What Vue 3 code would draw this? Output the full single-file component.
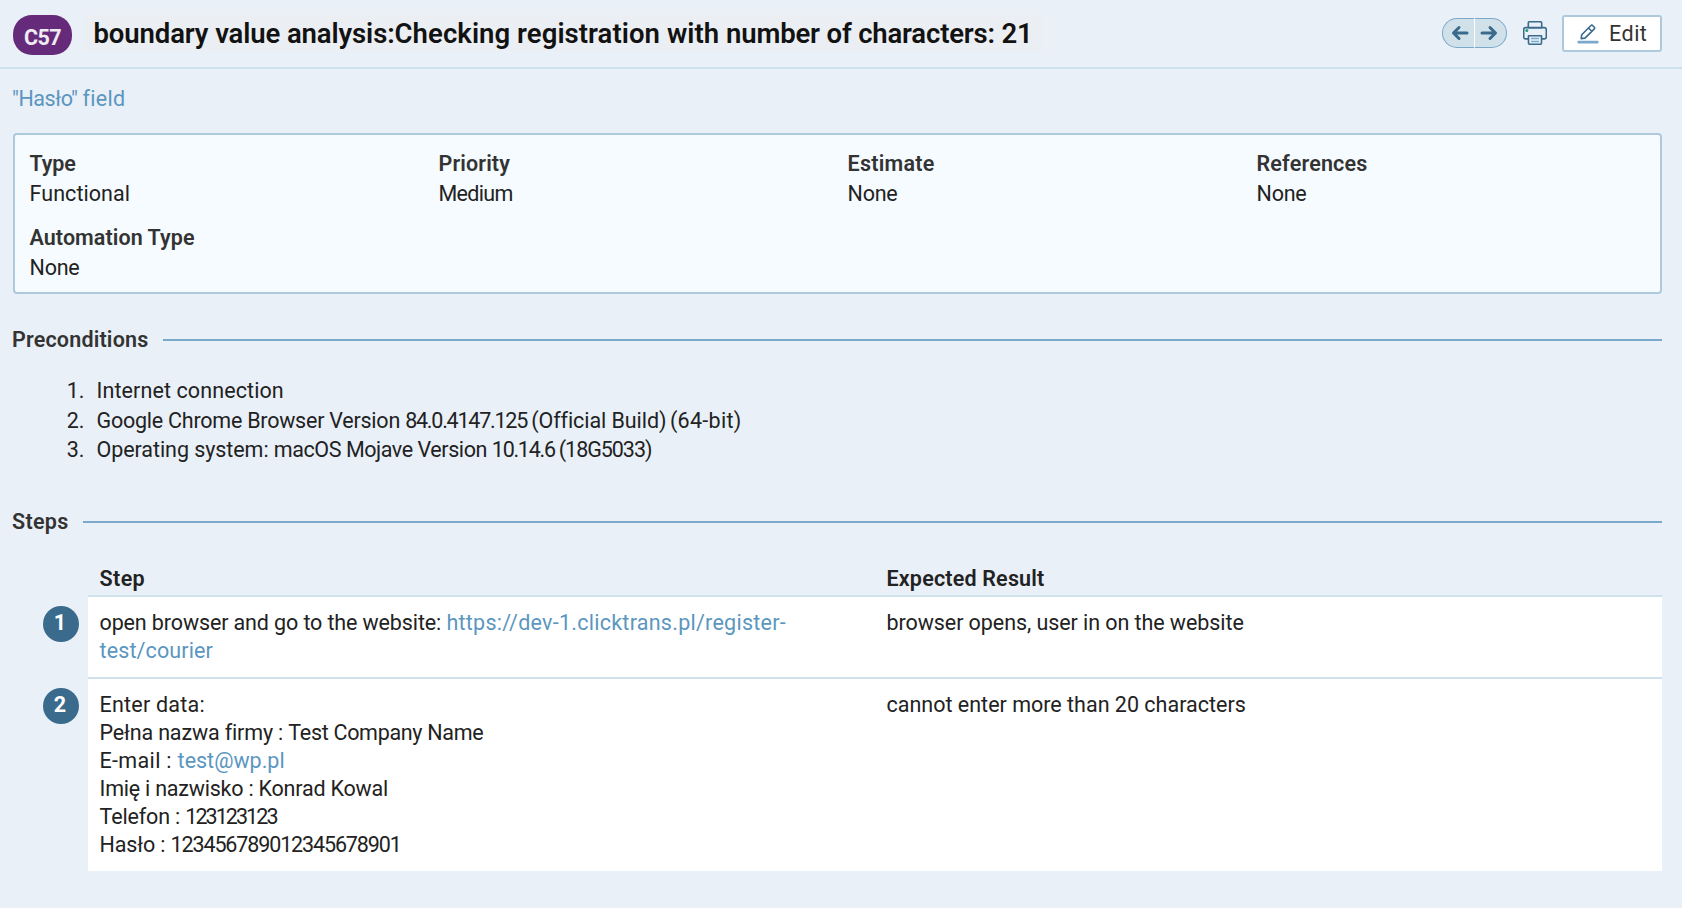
<script setup>
const details = [
  { label: 'Type', value: 'Functional', lt: 'n15', vt: 't6' },
  { label: 'Priority', value: 'Medium', lt: 't12', vt: 'n68' },
  { label: 'Estimate', value: 'None', lt: 't25', vt: 'n20' },
  { label: 'References', value: 'None', lt: 't19', vt: 'n20' },
  { label: 'Automation Type', value: 'None', lt: 't6', vt: 'n20' },
]

// Every line is a list of runs; `t` names the tracking class of the run.
const preconditions = [
  [{ s: 'Internet connection', t: 't10' }],
  [
    { s: 'Google Chrome Browser Version ', t: 'n25' },
    { s: '84.0.4147.125 ', t: 'n123' },
    { s: '(Official Build)', t: 'n7' },
    { s: ' ', t: 'n180' },
    { s: '(64-bit)', t: 't28' },
  ],
  [
    { s: 'Operating system: ', t: 'n7' },
    { s: 'macOS Mojave Version ', t: 'n43' },
    { s: '10.14.6 ', t: 'n126' },
    { s: '(18G5033)', t: 'n100' },
  ],
]

const steps = [
  {
    lines: [
      [
        { s: 'open browser and go to the website: ', t: 'n12' },
        { s: 'https://dev-1.clicktrans.pl/register-', t: 't25', link: true },
      ],
      [{ s: 'test/courier', t: 't12', link: true }],
    ],
    expected: { s: 'browser opens, user in on the website', t: 'n7' },
  },
  {
    lines: [
      [{ s: 'Enter data:', t: 't22' }],
      [{ s: 'Pełna nazwa firmy : ', t: 'n15' }, { s: 'Test Company Name', t: 'n30' }],
      [{ s: 'E-mail : ', t: 't34' }, { s: 'test@wp.pl', t: 't0' }],
      [{ s: 'Imię i nazwisko : ', t: 'n22' }, { s: 'Konrad Kowal', t: 'n20' }],
      [{ s: 'Telefon : ', t: 'n15' }, { s: '123123123', t: 'n195' }],
      [{ s: 'Hasło : ', t: 'n12' }, { s: '123456789012345678901', t: 'n113' }],
    ],
    expected: { s: 'cannot enter more than 20 characters', t: 't0' },
  },
]
steps[1].lines[2][1].link = true
</script>

<template>
  <div class="page">
    <header class="header">
      <span class="badge n58">C57</span>
      <h1 class="title"><span class="n10">boundary value analysis:</span><span class="t6">Checking registration with </span><span class="n17">number of characters: 21</span></h1>
      <div class="pager">
        <button class="page-btn prev" aria-label="Previous">
          <svg width="18" height="16" viewBox="0 0 18 16"><path d="M16 8H3M8 2.5 2.5 8 8 13.5" /></svg>
        </button>
        <button class="page-btn next" aria-label="Next">
          <svg width="18" height="16" viewBox="0 0 18 16"><path d="M2 8h13M10 2.5 15.5 8 10 13.5" /></svg>
        </button>
      </div>
      <svg class="printer" width="24" height="24" viewBox="0 0 24 24">
        <path class="edge" d="M5.3 17.9H2.7a2 2 0 0 1-2-2V8.6a2 2 0 0 1 2-2h18.6a2 2 0 0 1 2 2v7.3a2 2 0 0 1-2 2h-2.6" />
        <path class="edge sheet" d="M5.3 6.6V2a1.3 1.3 0 0 1 1.3-1.3h10.8A1.3 1.3 0 0 1 18.7 2v4.6z" />
        <path class="edge sheet" d="M5.5 14.7h13v7.3a1.3 1.3 0 0 1-1.3 1.3H6.8A1.3 1.3 0 0 1 5.5 22z" />
        <path class="rule" d="M8 17.5h8M8 20.5h8" />
        <circle cx="3.8" cy="9.6" r="1.5" fill="#1f9d7c" />
      </svg>
      <button class="edit">
        <svg width="22" height="20" viewBox="0 0 22 20">
          <rect x="0.5" y="16.7" width="21" height="2.8" rx="1" fill="#7ba9cb" />
          <path class="pen" d="M4.2 14.6 4.7 10.800 13.7 1.7a1.500 1.500 0 0 1 2.1 0l1.300 1.300a1.500 1.500 0 0 1 0 2.1L8 14.1z M11.500 4l3.300 3.300" />
        </svg>
        <span class="t56">Edit</span>
      </button>
    </header>

    <main class="content">
      <a class="crumb"><span class="n43">"Hasło" </span><span class="t34">field</span></a>

      <section class="details">
        <div v-for="d in details" :key="d.label" class="detail">
          <div class="label"><span :class="d.lt">{{ d.label }}</span></div>
          <div><span :class="d.vt">{{ d.value }}</span></div>
        </div>
      </section>

      <h2 class="heading pre"><span class="t19">Preconditions</span></h2>
      <ol class="list">
        <li v-for="(line, i) in preconditions" :key="i">
          <span class="num">{{ i + 1 }}.</span>
          <div class="line"><span v-for="(r, j) in line" :key="j" :class="r.t">{{ r.s }}</span></div>
        </li>
      </ol>

      <h2 class="heading"><span class="t28">Steps</span></h2>
      <div class="steps">
        <div class="row head">
          <div class="cell t48">Step</div>
          <div class="cell t19">Expected Result</div>
        </div>
        <div v-for="(step, i) in steps" :key="i" class="row body">
          <span class="circle">{{ i + 1 }}</span>
          <div class="cell">
            <div v-for="(line, k) in step.lines" :key="k" class="line"><span v-for="(r, j) in line" :key="j" :class="[r.t, { link: r.link }]">{{ r.s }}</span></div>
          </div>
          <div class="cell"><span :class="step.expected.t">{{ step.expected.s }}</span></div>
        </div>
      </div>
    </main>
  </div>
</template>

<style>
body { background: #e9f0f8; }
</style>

<style scoped>
.page {
  box-sizing: border-box;
  height: 908px;
  overflow: hidden;
  background: #e9f0f8;
  color: #222;
  font: 400 21.5px/28px Roboto, "Liberation Sans", sans-serif;
}
button { font: inherit; color: inherit; padding: 0; margin: 0; box-sizing: border-box; }
.header {
  box-sizing: border-box;
  display: flex;
  align-items: flex-start;
  height: 69px;
  padding: 15px 20px 0 13px;
  border-bottom: 2px solid #cfe1ea;
}
.badge {
  box-sizing: border-box;
  width: 59px;
  height: 40px;
  padding-top: 1.5px;
  border-radius: 19px;
  background: #652a79;
  color: #f0eaf3;
  font-weight: 700;
  line-height: 41px;
  text-align: center;
}
.title {
  box-sizing: border-box;
  width: 958px;
  height: 36px;
  margin: 0 0 0 12px;
  padding-left: 9.500px;
  background: #ebeff3;
  color: #121212;
  font-size: 27.5px;
  font-weight: 600;
  line-height: 38px;
  white-space: pre;
}
.pager { display: flex; margin: 3px 0 0 auto; width: 65px; height: 30px; }
.page-btn { flex: 1; display: flex; align-items: center; border: 1.5px solid #7ba9cb; background: #d0e1ea; }
.page-btn svg { fill: none; stroke: #3a6a8c; stroke-width: 3; stroke-linecap: round; stroke-linejoin: round; }
.prev { border-right: 1px solid #fff; border-radius: 15px 0 0 15px; justify-content: flex-end; padding-right: 5px; }
.next { border-left: 0; border-radius: 0 15px 15px 0; padding-left: 5px; }
.printer { margin: 6px 15px 0 16px; }
.edge { fill: none; stroke: #3a6a8c; stroke-width: 1.6; stroke-linejoin: round; }
.sheet { fill: #e9f0f8; }
.rule { fill: none; stroke: #7ba9cb; stroke-width: 1.3; }
.edit {
  display: flex;
  align-items: center;
  width: 100px;
  height: 37px;
  padding-left: 13px;
  gap: 10px;
  border: 2px solid #aec8dc;
  border-radius: 3px;
  background: #fff;
  color: #333;
}
.edit span { margin-top: 1px; }
.pen { fill: none; stroke: #3a6a8c; stroke-width: 1.6; stroke-linejoin: round; }

.content { padding: 0 20px 0 13px; }
.crumb { display: block; margin-left: -1px; padding-top: 16px; height: 48px; color: #5b96bf; white-space: pre; }
.details {
  box-sizing: border-box;
  height: 161px;
  padding: 14px 0 0 14.5px;
  display: grid;
  grid-template-columns: repeat(4, 409px);
  align-content: start;
  row-gap: 14px;
  border: 2px solid #aec8dc;
  border-radius: 4px;
  background: #f5fbff;
  line-height: 30px;
}
.label { color: #333; font-weight: 600; }
.heading {
  display: flex;
  align-items: center;
  gap: 15px;
  margin: 0 0 0 -1px;
  height: 28px;
  color: #333;
  font-size: 21.5px;
  font-weight: 600;
}
.heading::after { content: ""; flex: 1; height: 2px; background: #7ba9cb; }
.pre { margin-top: 32px; }
.list { list-style: none; margin: 22px 0 0; padding: 0; height: 132px; line-height: 29.6px; }
.list li { display: flex; }
.num { width: 71.500px; margin-right: 12px; text-align: right; }
.line { white-space: pre; }
.steps { margin: 29px 0 0 75px; }
.row { position: relative; display: grid; grid-template-columns: 787px 1fr; }
.cell { padding-left: 11.5px; }
.head { height: 30px; font-weight: 600; }
.body { padding: 12px 0; border-top: 2px solid #cfe1ea; background: #fff; }
.circle {
  position: absolute;
  left: -45px;
  top: 9px;
  box-sizing: border-box;
  width: 36px;
  height: 36px;
  padding-right: 2px;
  border-radius: 50%;
  background: #3a6a8c;
  color: #fff;
  font-weight: 700;
  line-height: 33px;
  text-align: center;
}
.link { color: #5b96bf; }

.t0 { letter-spacing: 0; }
.t6 { letter-spacing: 0.064px; }
.t10 { letter-spacing: 0.1px; }
.t12 { letter-spacing: 0.124px; }
.t19 { letter-spacing: 0.185px; }
.t22 { letter-spacing: 0.22px; }
.t25 { letter-spacing: 0.26px; }
.t28 { letter-spacing: 0.282px; }
.t34 { letter-spacing: 0.338px; }
.t48 { letter-spacing: 0.4px; }
.t56 { letter-spacing: 0.5px; }
.n7 { letter-spacing: -0.07px; }
.n10 { letter-spacing: -0.11px; }
.n12 { letter-spacing: -0.122px; }
.n15 { letter-spacing: -0.15px; }
.n17 { letter-spacing: -0.17px; }
.n20 { letter-spacing: -0.2px; }
.n22 { letter-spacing: -0.222px; }
.n25 { letter-spacing: -0.235px; }
.n30 { letter-spacing: -0.31px; }
.n43 { letter-spacing: -0.435px; }
.n58 { letter-spacing: -0.583px; }
.n68 { letter-spacing: -0.68px; }
.n100 { letter-spacing: -1.05px; }
.n113 { letter-spacing: -1.131px; }
.n123 { letter-spacing: -1.228px; }
.n126 { letter-spacing: -1.262px; }
.n180 { letter-spacing: -1.8px; }
.n195 { letter-spacing: -1.95px; }
</style>
